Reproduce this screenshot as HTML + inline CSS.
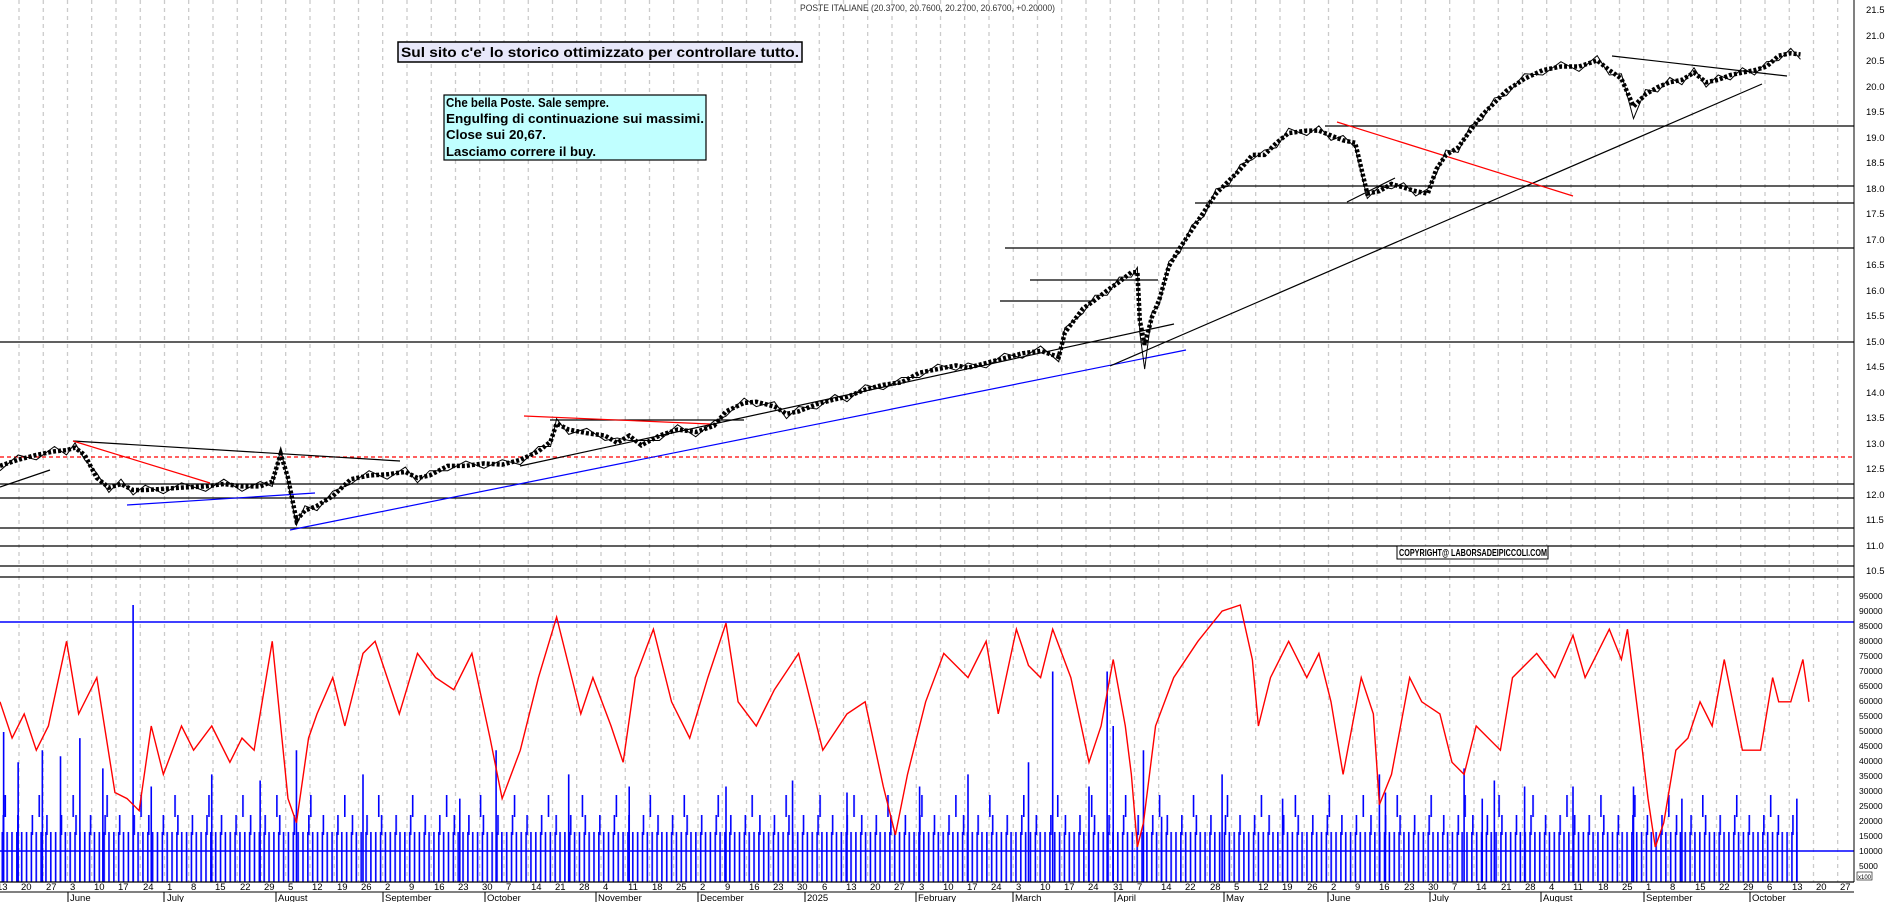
<!DOCTYPE html>
<html><head><meta charset="utf-8"><style>
html,body{margin:0;padding:0;background:#fff;width:1890px;height:902px;overflow:hidden}
svg{display:block}
text{font-family:"Liberation Sans",sans-serif}
</style></head><body>
<svg width="1890" height="902" xmlns="http://www.w3.org/2000/svg">
<defs>
<pattern id="vg" x="0" y="0" width="24.25" height="8" patternUnits="userSpaceOnUse"><line x1="19" y1="0" x2="19" y2="4" stroke="#bbb" stroke-width="1"/></pattern>
<pattern id="vb" x="0" y="0" width="4.85" height="10" patternUnits="userSpaceOnUse"><rect x="1.5" y="0" width="1.6" height="10" fill="#00f"/></pattern>
<pattern id="vb2" x="1" y="0" width="14.55" height="10" patternUnits="userSpaceOnUse"><rect x="1.5" y="0" width="1.6" height="10" fill="#00f"/></pattern>
<pattern id="vb3" x="3" y="0" width="33.95" height="10" patternUnits="userSpaceOnUse"><rect x="1.5" y="0" width="1.6" height="10" fill="#00f"/></pattern>
</defs>
<rect width="1890" height="902" fill="#fff"/>
<rect x="0" y="0" width="1850" height="882" fill="url(#vg)"/>
<g stroke="#000" stroke-width="1.3" fill="none">
<line x1="0" y1="342" x2="1854" y2="342"/>
<line x1="0" y1="484" x2="1854" y2="484"/>
<line x1="0" y1="498" x2="1854" y2="498"/>
<line x1="0" y1="528" x2="1854" y2="528"/>
<line x1="0" y1="546" x2="1854" y2="546"/>
<line x1="0" y1="566" x2="1854" y2="566"/>
<line x1="0" y1="577" x2="1854" y2="577"/>
<line x1="1005" y1="248" x2="1854" y2="248"/>
<line x1="1195" y1="203" x2="1854" y2="203"/>
<line x1="1222" y1="186" x2="1854" y2="186"/>
<line x1="1325" y1="126" x2="1854" y2="126"/>
<line x1="1000" y1="301" x2="1095" y2="301"/>
<line x1="1030" y1="280" x2="1158" y2="280"/>
<line x1="550" y1="420" x2="744" y2="420"/>
</g>
<line x1="0" y1="457" x2="1854" y2="457" stroke="#f00" stroke-width="1.3" stroke-dasharray="4,3"/>
<g fill="none" stroke-width="1.2">
<line x1="73" y1="441" x2="400" y2="461" stroke="#000"/>
<line x1="73" y1="441" x2="210" y2="483" stroke="#f00"/>
<line x1="127" y1="505" x2="315" y2="493" stroke="#00f"/>
<line x1="290" y1="530" x2="1186" y2="350" stroke="#00f"/>
<line x1="0" y1="487" x2="50" y2="470" stroke="#000"/>
<line x1="520" y1="466" x2="1174" y2="324" stroke="#000"/>
<line x1="1110" y1="366" x2="1762" y2="84" stroke="#000"/>
<line x1="1612" y1="56" x2="1787" y2="76" stroke="#000"/>
<line x1="1337" y1="122" x2="1573" y2="196" stroke="#f00"/>
<line x1="524" y1="416" x2="710" y2="424" stroke="#f00"/>
<line x1="1347" y1="202" x2="1395" y2="178" stroke="#000"/>
</g>
<g transform="scale(1.21)">
<polyline fill="none" stroke="#000" stroke-width="4.5" vector-effect="non-scaling-stroke" stroke-dasharray="3,2" points="0,385 15,380 30,376 45,373 55,372 62,370 70,376 80,395 90,403 100,400 110,405 120,405 135,404 150,403 170,402 185,400 200,402 215,402 225,398 232,375 238,395 245,430 252,422 262,418 275,410 290,396 305,393 320,392 335,390 345,395 355,393 370,385 385,385 400,383 415,384 430,380 445,373 455,365 460,350 470,355 485,358 500,360 510,366 520,360 530,368 545,360 560,355 575,357 590,352 600,340 615,333 625,332 640,336 650,342 660,340 675,334 690,330 700,328 715,322 730,318 745,316 760,308 775,305 790,302 800,304 815,300 830,296 845,292 860,290 875,295 880,275 895,255 905,248 915,240 925,233 935,225 940,225 942,265 946,285 952,262 958,248 966,220 975,205 985,190 995,175 1005,160 1015,150 1025,140 1035,128 1045,128 1055,118 1065,110 1080,108 1090,108 1100,112 1110,116 1120,118 1130,160 1140,158 1150,152 1160,155 1170,158 1180,160 1187,140 1195,128 1205,122 1215,108 1225,95 1235,85 1245,75 1260,65 1275,58 1290,55 1305,55 1320,50 1330,58 1340,65 1350,88 1360,78 1370,72 1380,68 1390,66 1400,60 1410,68 1420,66 1430,62 1440,60 1450,58 1460,55 1470,46 1480,44 1488,45"/>
<polyline fill="none" stroke="#000" stroke-width="1" vector-effect="non-scaling-stroke" points="0,389 15,376 30,380 45,369 55,376 62,366 70,380 80,391 90,407 100,396 110,409 120,401 135,408 150,399 170,406 185,396 200,406 215,398 225,402 232,371 238,399 245,434 252,418 262,422 275,406 290,400 305,389 320,396 335,386 345,399 355,389 370,389 385,381 400,387 415,380 430,384 445,369 455,369 460,346 470,359 485,354 500,364 510,362 520,364 530,364 545,364 560,351 575,361 590,348 600,344 615,329 625,336 640,332 650,346 660,336 675,338 690,326 700,332 715,318 730,322 745,312 760,312 775,301 790,306 800,300 815,304 830,292 845,296 860,286 875,299 880,271 895,259 905,244 915,244 925,229 935,229 940,221 942,275 946,305 952,258 958,252 966,216 975,209 985,186 995,179 1005,156 1015,154 1025,136 1035,132 1045,124 1055,122 1065,106 1080,112 1090,104 1100,116 1110,112 1120,122 1130,164 1140,154 1150,156 1160,151 1170,162 1180,156 1187,144 1195,124 1205,126 1215,104 1225,99 1235,81 1245,79 1260,61 1275,62 1290,51 1305,59 1320,46 1330,62 1340,61 1350,98 1360,74 1370,76 1380,64 1390,70 1400,56 1410,72 1420,62 1430,66 1440,56 1450,62 1460,51 1470,50 1480,40 1488,49"/>
</g>
<line x1="0" y1="622" x2="1854" y2="622" stroke="#00f" stroke-width="1.5"/>
<rect x="0" y="832" width="1800" height="50" fill="url(#vb)"/>
<rect x="0" y="815" width="1800" height="20" fill="url(#vb2)"/>
<rect x="0" y="795" width="1800" height="22" fill="url(#vb3)"/>
<g transform="scale(1.21)">
<path stroke="#00f" stroke-width="1.6" vector-effect="non-scaling-stroke" d="M3 729V605M15 729V630M35 729V620M50 729V625M66 729V610M85 729V635M110 729V500M125 729V650M175 729V640M215 729V645M245 729V620M300 729V640M380 729V660M410 729V620M470 729V640M520 729V650M600 729V650M655 729V645M700 729V655M760 729V650M800 729V640M850 729V630M870 729V555M900 729V650M915 729V555M920 729V600M945 729V620M960 729V675M1010 729V640M1060 729V660M1140 729V640M1145 729V655M1210 729V635M1225 729V660M1235 729V645M1260 729V650M1300 729V650M1350 729V650M1390 729V660M1485 729V660"/>
<polyline fill="none" stroke="#f00" stroke-width="1.4" vector-effect="non-scaling-stroke" points="0,580 10,610 20,590 30,620 40,600 55,530 65,590 80,560 95,655 105,660 115,670 125,600 135,640 150,600 160,620 175,600 190,630 200,610 210,620 225,530 238,660 245,680 255,610 262,590 275,560 285,600 300,540 310,530 320,560 330,590 345,540 360,560 375,570 390,540 405,610 415,660 430,620 445,560 460,510 470,550 480,590 490,560 505,600 515,630 525,560 540,520 555,580 570,610 585,560 600,515 610,580 625,600 640,570 660,540 680,620 700,590 715,580 730,650 740,690 750,640 765,580 780,540 800,560 815,530 825,590 840,520 850,550 860,560 870,520 885,560 900,630 910,600 920,545 930,600 935,640 940,700 945,680 955,600 970,560 990,530 1010,505 1025,500 1035,545 1040,600 1050,560 1065,530 1080,560 1090,540 1100,580 1110,640 1125,560 1135,590 1140,665 1150,640 1165,560 1175,580 1190,590 1200,630 1210,640 1220,600 1240,620 1250,560 1270,540 1285,560 1300,525 1310,560 1320,540 1330,520 1340,545 1345,520 1355,600 1362,660 1368,700 1375,680 1385,620 1395,610 1405,580 1415,600 1425,545 1440,620 1455,620 1465,560 1470,580 1480,580 1490,545 1495,580"/>
</g>
<line x1="0" y1="851" x2="1854" y2="851" stroke="#00f" stroke-width="1.5"/>
<line x1="1854" y1="0" x2="1854" y2="882" stroke="#000" stroke-width="1"/>
<line x1="0" y1="882" x2="1854" y2="882" stroke="#000" stroke-width="1.3"/>
<line x1="0" y1="892" x2="1854" y2="892" stroke="#000" stroke-width="1"/>
<path stroke="#000" stroke-width="1" d="M68 892V902M164 892V902M276 892V902M383 892V902M485 892V902M596 892V902M698 892V902M805 892V902M916 892V902M1013 892V902M1115 892V902M1224 892V902M1328 892V902M1430 892V902M1541 892V902M1644 892V902M1750 892V902"/>
<text x="800" y="11" font-size="9" fill="#333" textLength="255" lengthAdjust="spacingAndGlyphs">POSTE ITALIANE (20.3700, 20.7600, 20.2700, 20.6700, +0.20000)</text>
<rect x="398" y="42" width="404" height="20" fill="#e8e8fa" stroke="#000" stroke-width="1.5"/>
<text x="401" y="57" font-size="14" font-weight="bold" textLength="398" lengthAdjust="spacingAndGlyphs">Sul sito c'e' lo storico ottimizzato per controllare tutto.</text>
<rect x="444" y="95" width="262" height="65" fill="#c0ffff" stroke="#000" stroke-width="1.2"/>
<g font-size="12.5" font-weight="bold" fill="#000">
<text x="446" y="107" textLength="163" lengthAdjust="spacingAndGlyphs">Che bella Poste. Sale sempre.</text>
<text x="446" y="123" textLength="258" lengthAdjust="spacingAndGlyphs">Engulfing di continuazione sui massimi.</text>
<text x="446" y="139" textLength="100" lengthAdjust="spacingAndGlyphs">Close sui 20,67.</text>
<text x="446" y="156" textLength="150" lengthAdjust="spacingAndGlyphs">Lasciamo correre il buy.</text>
</g>
<rect x="1397" y="546" width="151" height="13" fill="#fff" stroke="#000" stroke-width="1"/>
<text x="1399" y="556" font-size="10" font-weight="bold" textLength="148" lengthAdjust="spacingAndGlyphs">COPYRIGHT@ LABORSADEIPICCOLI.COM</text>
<g font-size="9.5" fill="#000">
<text x="1866" y="13">21.5</text><text x="1866" y="39">21.0</text><text x="1866" y="64">20.5</text><text x="1866" y="90">20.0</text>
<text x="1866" y="115">19.5</text><text x="1866" y="141">19.0</text><text x="1866" y="166">18.5</text><text x="1866" y="192">18.0</text>
<text x="1866" y="217">17.5</text><text x="1866" y="243">17.0</text><text x="1866" y="268">16.5</text><text x="1866" y="294">16.0</text>
<text x="1866" y="319">15.5</text><text x="1866" y="345">15.0</text><text x="1866" y="370">14.5</text><text x="1866" y="396">14.0</text>
<text x="1866" y="421">13.5</text><text x="1866" y="447">13.0</text><text x="1866" y="472">12.5</text><text x="1866" y="498">12.0</text>
<text x="1866" y="523">11.5</text><text x="1866" y="549">11.0</text><text x="1866" y="574">10.5</text>
</g>
<g font-size="8.5" fill="#000">
<text x="1859" y="599">95000</text><text x="1859" y="614">90000</text><text x="1859" y="629">85000</text><text x="1859" y="644">80000</text>
<text x="1859" y="659">75000</text><text x="1859" y="674">70000</text><text x="1859" y="689">65000</text><text x="1859" y="704">60000</text>
<text x="1859" y="719">55000</text><text x="1859" y="734">50000</text><text x="1859" y="749">45000</text><text x="1859" y="764">40000</text>
<text x="1859" y="779">35000</text><text x="1859" y="794">30000</text><text x="1859" y="809">25000</text><text x="1859" y="824">20000</text>
<text x="1859" y="839">15000</text><text x="1859" y="854">10000</text><text x="1859" y="869">5000</text>
<rect x="1857" y="872" width="15" height="8" fill="#fff" stroke="#000" stroke-width="0.6"/>
<text x="1858" y="879" font-size="6">x100</text>
</g>
<g font-size="9.5" fill="#000">
<text x="-3" y="890">13</text><text x="21" y="890">20</text><text x="46" y="890">27</text><text x="70" y="890">3</text><text x="94" y="890">10</text><text x="118" y="890">17</text><text x="143" y="890">24</text><text x="167" y="890">1</text><text x="191" y="890">8</text><text x="215" y="890">15</text><text x="240" y="890">22</text><text x="264" y="890">29</text><text x="288" y="890">5</text><text x="312" y="890">12</text><text x="337" y="890">19</text><text x="361" y="890">26</text><text x="385" y="890">2</text><text x="409" y="890">9</text><text x="434" y="890">16</text><text x="458" y="890">23</text><text x="482" y="890">30</text><text x="506" y="890">7</text><text x="531" y="890">14</text><text x="555" y="890">21</text><text x="579" y="890">28</text><text x="603" y="890">4</text><text x="628" y="890">11</text><text x="652" y="890">18</text><text x="676" y="890">25</text><text x="700" y="890">2</text><text x="725" y="890">9</text><text x="749" y="890">16</text><text x="773" y="890">23</text><text x="797" y="890">30</text><text x="822" y="890">6</text><text x="846" y="890">13</text><text x="870" y="890">20</text><text x="894" y="890">27</text><text x="919" y="890">3</text><text x="943" y="890">10</text><text x="967" y="890">17</text><text x="991" y="890">24</text><text x="1016" y="890">3</text><text x="1040" y="890">10</text><text x="1064" y="890">17</text><text x="1088" y="890">24</text><text x="1113" y="890">31</text><text x="1137" y="890">7</text><text x="1161" y="890">14</text><text x="1185" y="890">22</text><text x="1210" y="890">28</text><text x="1234" y="890">5</text><text x="1258" y="890">12</text><text x="1282" y="890">19</text><text x="1307" y="890">26</text><text x="1331" y="890">2</text><text x="1355" y="890">9</text><text x="1379" y="890">16</text><text x="1404" y="890">23</text><text x="1428" y="890">30</text><text x="1452" y="890">7</text><text x="1476" y="890">14</text><text x="1501" y="890">21</text><text x="1525" y="890">28</text><text x="1549" y="890">4</text><text x="1573" y="890">11</text><text x="1598" y="890">18</text><text x="1622" y="890">25</text><text x="1646" y="890">1</text><text x="1670" y="890">8</text><text x="1695" y="890">15</text><text x="1719" y="890">22</text><text x="1743" y="890">29</text><text x="1767" y="890">6</text><text x="1792" y="890">13</text><text x="1816" y="890">20</text><text x="1840" y="890">27</text>
</g>
<g font-size="9.5" fill="#000">
<text x="70" y="901">June</text><text x="167" y="901">July</text><text x="278" y="901">August</text><text x="385" y="901">September</text><text x="487" y="901">October</text><text x="598" y="901">November</text><text x="700" y="901">December</text><text x="807" y="901">2025</text><text x="918" y="901">February</text><text x="1015" y="901">March</text><text x="1117" y="901">April</text><text x="1226" y="901">May</text><text x="1330" y="901">June</text><text x="1432" y="901">July</text><text x="1543" y="901">August</text><text x="1646" y="901">September</text><text x="1752" y="901">October</text>
</g>
</svg>
</body></html>
